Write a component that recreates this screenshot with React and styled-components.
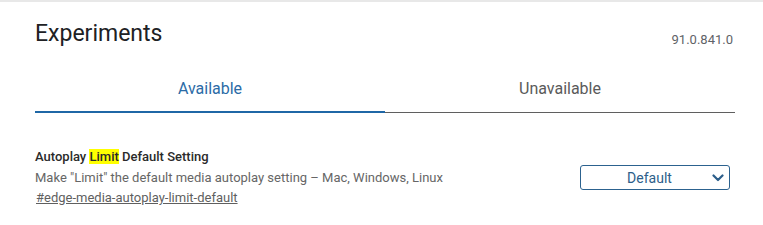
import React from 'react'
import styled, { createGlobalStyle } from 'styled-components'

const GlobalStyle = createGlobalStyle`
  html, body {
    margin: 0;
    padding: 0;
    background: #ffffff;
  }
  body {
    font-family: Roboto, "Noto Sans", "Liberation Sans", sans-serif;
  }
`

const Page = styled.div`
  border-top: 2px solid #e8e8e8;
  padding: 0 28px 0 35px;
  width: 763px;
  height: 223px;
  box-sizing: border-box;
`

const Header = styled.div`
  display: flex;
  justify-content: space-between;
  align-items: flex-start;
  padding-top: 16px;
`

const Title = styled.h1`
  margin: 0;
  font-size: 23px;
  line-height: 31px;
  font-weight: 400;
  color: #202124;
`

const Version = styled.span`
  margin-top: 14px;
  margin-right: 2px;
  font-size: 13px;
  line-height: 16px;
  color: #5f6368;
`

const Tabs = styled.div`
  display: grid;
  grid-template-columns: 1fr 1fr;
`

const Tab = styled.div`
  text-align: center;
  font-size: 16px;
  line-height: 20px;
  padding-top: 29.5px;
  padding-bottom: ${props => props.active ? '12px' : '13px'};
  color: ${props => props.active ? '#2b6ba6' : '#5a5a5a'};
  border-bottom: ${props => props.active ? '2px solid #1f67a6' : '1px solid #5f5f5f'};
`

const Item = styled.div`
  display: flex;
  justify-content: space-between;
  align-items: center;
  padding-top: 34.5px;
`

const ItemText = styled.div`
  display: flex;
  flex-direction: column;
`

const ItemName = styled.div`
  font-size: 13px;
  line-height: 20px;
  font-weight: 500;
  color: #2a2a2a;
  margin-bottom: 1px;
`

const Mark = styled.span`
  background: #ffff00;
`

const Description = styled.div`
  font-size: 13px;
  line-height: 20px;
  color: #666666;
`

const Permalink = styled.a`
  font-size: 13px;
  line-height: 20px;
  color: #5f5f5f;
  text-decoration: underline;
  padding-left: 1px;
`

const Select = styled.div`
  display: flex;
  align-items: center;
  width: 150px;
  height: 25px;
  box-sizing: border-box;
  margin-right: 5px;
  border: 1px solid #2c628f;
  border-radius: 3px;
  color: #2c5e8a;
  font-size: 14px;
  padding: 0 5px 0 0;
`

const SelectLabel = styled.span`
  flex: 1;
  text-align: center;
  padding-left: 6px;
`

const Chevron = () => (
  <svg width="12" height="8" viewBox="0 0 12 8">
    <path d="M1.5 1.5 L6 6 L10.5 1.5" fill="none" stroke="#2c5e8a" strokeWidth="2.2" strokeLinecap="round" strokeLinejoin="round" />
  </svg>
)

export default function App() {
  return (
    <>
      <GlobalStyle />
      <Page>
        <Header>
          <Title>Experiments</Title>
          <Version>91.0.841.0</Version>
        </Header>
        <Tabs>
          <Tab active>Available</Tab>
          <Tab>Unavailable</Tab>
        </Tabs>
        <Item>
          <ItemText>
            <ItemName>Autoplay <Mark>Limit</Mark> Default Setting</ItemName>
            <Description>Make "Limit" the default media autoplay setting – Mac, Windows, Linux</Description>
            <Permalink href="#edge-media-autoplay-limit-default">#edge-media-autoplay-limit-default</Permalink>
          </ItemText>
          <Select>
            <SelectLabel>Default</SelectLabel>
            <Chevron />
          </Select>
        </Item>
      </Page>
    </>
  )
}
